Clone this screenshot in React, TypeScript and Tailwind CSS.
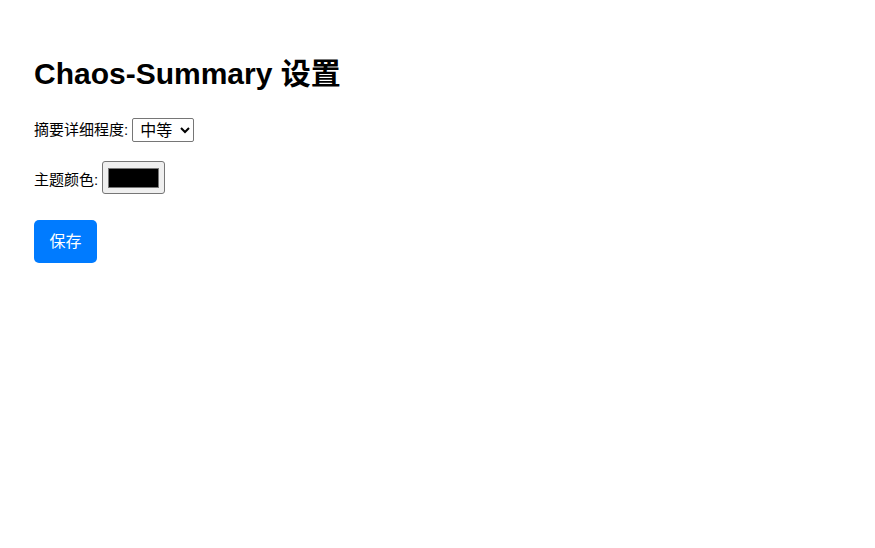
import React, { useState } from 'react';

export default function App() {
  const [detail, setDetail] = useState('medium');

  return (
    <div
      className="min-h-[548px] bg-white px-[34px] pt-[57px] text-black"
      style={{ fontFamily: '"Liberation Sans", "Noto Sans CJK SC", sans-serif' }}
    >
      {/* Title */}
      <h1 className="text-[30px] font-bold leading-[34px]">Chaos-Summary 设置</h1>

      {/* Detail level */}
      <div className="mt-[27px] flex items-center text-[15px]">
        <label htmlFor="detail" className="mr-[4px]">摘要详细程度:</label>
        <select
          id="detail"
          value={detail}
          onChange={(e) => setDetail(e.target.value)}
          className="h-[24px] w-[62px] rounded-[2px] border border-[#767676] bg-white pl-[3px] text-[16px] leading-[20px]"
        >
          <option value="short">简短</option>
          <option value="medium">中等</option>
          <option value="long">详细</option>
        </select>
      </div>

      {/* Theme colour */}
      <div className="mt-[19px] flex items-end text-[15px]">
        <label className="mb-[3px] mr-[4px]">主题颜色:</label>
        <div className="flex h-[33px] w-[63px] items-center justify-center rounded-[3px] border border-[#767676] bg-[#efefef]">
          <div className="h-[20px] w-[51px] border border-[#777] bg-black" />
        </div>
      </div>

      {/* Save */}
      <button className="mt-[26px] h-[43px] w-[63px] rounded-[5px] bg-[#007bff] text-[16px] text-white">
        保存
      </button>
    </div>
  );
}
